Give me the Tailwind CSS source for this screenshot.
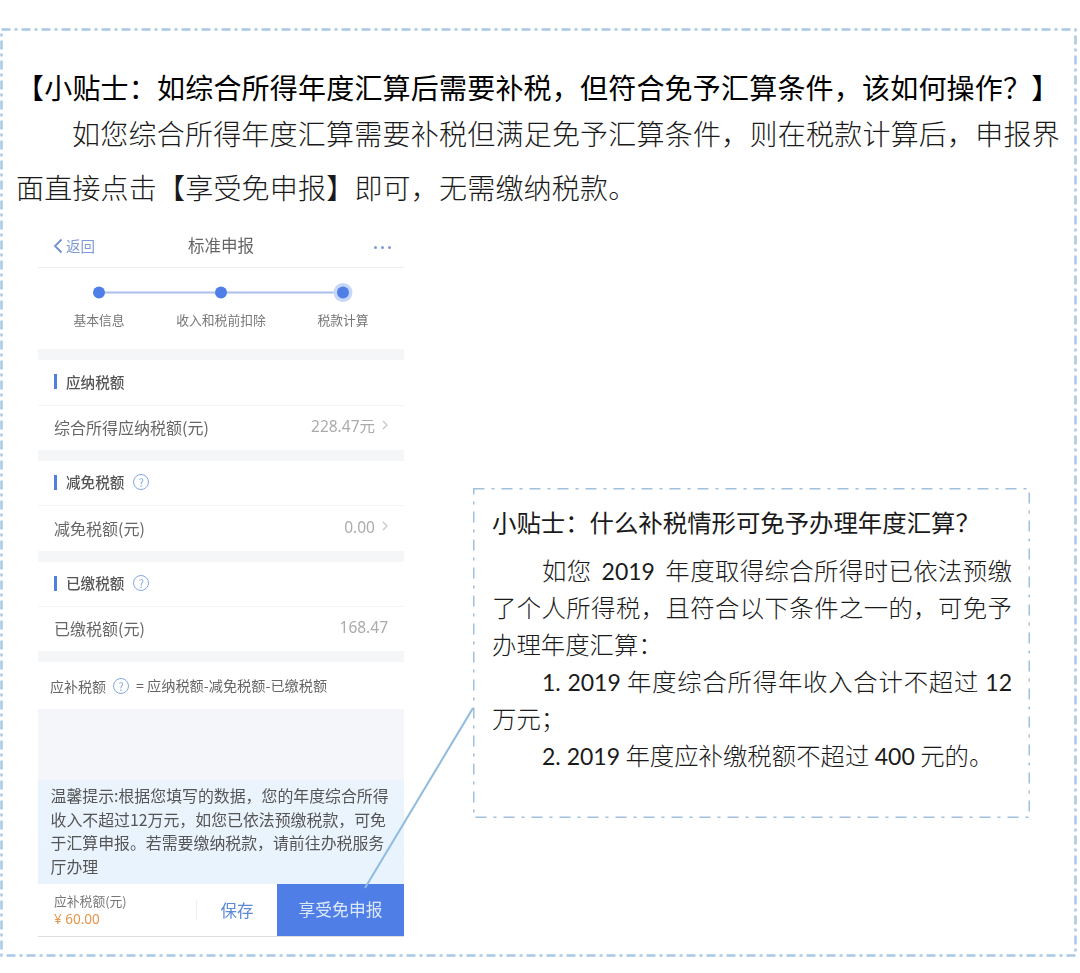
<!doctype html>
<html lang="zh-CN">
<head>
<meta charset="utf-8">
<script src="https://cdn.jsdelivr.net/npm/@tailwindcss/browser@4"></script>
</head>
<body class="bg-white">
<div class="relative w-[1080px] h-[973px] overflow-hidden bg-white text-[#1a1a1a] font-['Noto_Sans_CJK_SC','Noto_Sans',sans-serif]">

  <!-- outer decorative frame -->
  <svg class="absolute left-0 top-0 pointer-events-none" width="1080" height="973" fill="none">
    <rect x="1.5" y="29.5" width="1074" height="926" stroke="#a8c9e8" stroke-width="2.5" stroke-dasharray="9 4 3 4"/>
  </svg>

  <div class="relative pl-[16px] pr-[20px] pt-[69px]">
    <div class="text-[28px] leading-[37px] tracking-[0.2px] font-normal text-black whitespace-nowrap">【小贴士：如综合所得年度汇算后需要补税，但符合免予汇算条件，该如何操作？】</div>
    <p class="text-[28px] leading-[54px] font-light text-justify indent-[56px] tracking-[0.2px]">如您综合所得年度汇算需要补税但满足免予汇算条件，则在税款计算后，申报界面直接点击【享受免申报】即可，无需缴纳税款。</p>
  </div>

  <div class="relative flex items-start pl-[38px] mt-[18px]">
    <!-- phone -->
    <div class="w-[366px] shrink-0 bg-white blur-[0.4px]">
      <div class="grid grid-cols-3 items-center h-[36px] pb-[8px] pl-[15px] pr-[13px] border-b border-[#eeeeee]">
        <div class="flex items-center gap-[3px] text-[14.5px] text-[#7f9ad4]">
          <svg width="10" height="16" viewBox="0 0 10 16" fill="none"><path d="M8.5 1.5 2 8l6.5 6.5" stroke="#6f8fd6" stroke-width="1.8"/></svg>
          <span>返回</span>
        </div>
        <div class="text-center text-[16.5px] text-[#666666] -ml-[2px] whitespace-nowrap">标准申报</div>
        <div class="flex justify-end gap-[4px] pt-[4px]">
          <span class="size-[3px] rounded-full bg-[#7f9ad4]"></span>
          <span class="size-[3px] rounded-full bg-[#7f9ad4]"></span>
          <span class="size-[3px] rounded-full bg-[#7f9ad4]"></span>
        </div>
      </div>

      <div class="pt-[12px] pb-[20px]">
        <svg class="block" width="366" height="24" fill="none">
          <line x1="61" y1="12.5" x2="305" y2="12.5" stroke="#a9c0ee" stroke-width="2"/>
          <circle cx="61" cy="12.5" r="6" fill="#4f7fe6"/>
          <circle cx="183" cy="12.5" r="6" fill="#4f7fe6"/>
          <circle cx="305" cy="12.5" r="9.5" fill="#c6d7f7"/>
          <circle cx="305" cy="12.5" r="6" fill="#4f7fe6"/>
        </svg>
        <div class="grid grid-cols-3 mt-[7px] text-[12.8px] leading-[18px] text-center text-[#777777]">
          <div>基本信息</div><div>收入和税前扣除</div><div>税款计算</div>
        </div>
      </div>

      <div class="h-[11px] bg-[#f5f6f8]"></div>
      <div class="flex items-center h-[46px] pb-[2px] pl-[16px] gap-[9px] border-b border-[#f4f4f4] text-[14.6px] font-medium text-[#555555]">
        <span class="w-[3px] h-[15px] bg-[#4f7fe0]"></span><span>应纳税额</span>
      </div>
      <div class="flex items-center justify-between h-[44px] pb-[2px] pl-[16px] pr-[16px] text-[16px] text-[#666666]">
        <span>综合所得应纳税额(元)</span>
        <span class="flex items-center gap-[7px] text-[15.5px] text-[#ababab] font-['Noto_Sans','Noto_Sans_CJK_SC',sans-serif]">228.47元
          <svg class="-mt-[4px]" width="6" height="10" viewBox="0 0 6 10" fill="none"><path d="M1 1l4 4-4 4" stroke="#c4c4c4" stroke-width="1.2"/></svg>
        </span>
      </div>

      <div class="h-[11px] bg-[#f5f6f8]"></div>
      <div class="flex items-center h-[45px] pb-[2px] pl-[16px] gap-[9px] border-b border-[#f4f4f4] text-[14.6px] font-medium text-[#555555]">
        <span class="w-[3px] h-[15px] bg-[#4f7fe0]"></span><span>减免税额</span>
        <span class="flex items-center justify-center size-[16px] rounded-full border border-[#86a9e4] text-[11px] font-normal text-[#86a9e4]">?</span>
      </div>
      <div class="flex items-center justify-between h-[45px] pb-[2px] pl-[16px] pr-[16px] text-[16px] text-[#666666]">
        <span>减免税额(元)</span>
        <span class="flex items-center gap-[7px] text-[15.5px] text-[#ababab] font-['Noto_Sans','Noto_Sans_CJK_SC',sans-serif]">0.00
          <svg class="-mt-[4px]" width="6" height="10" viewBox="0 0 6 10" fill="none"><path d="M1 1l4 4-4 4" stroke="#c4c4c4" stroke-width="1.2"/></svg>
        </span>
      </div>

      <div class="h-[11px] bg-[#f5f6f8]"></div>
      <div class="flex items-center h-[45px] pb-[2px] pl-[16px] gap-[9px] border-b border-[#f4f4f4] text-[14.6px] font-medium text-[#555555]">
        <span class="w-[3px] h-[15px] bg-[#4f7fe0]"></span><span>已缴税额</span>
        <span class="flex items-center justify-center size-[16px] rounded-full border border-[#86a9e4] text-[11px] font-normal text-[#86a9e4]">?</span>
      </div>
      <div class="flex items-center justify-between h-[44px] pb-[2px] pl-[16px] pr-[16px] text-[16px] text-[#666666]">
        <span>已缴税额(元)</span>
        <span class="text-[15.5px] text-[#ababab] font-['Noto_Sans','Noto_Sans_CJK_SC',sans-serif]">168.47</span>
      </div>

      <div class="h-[11px] bg-[#f5f6f8]"></div>
      <div class="flex items-center h-[47px] pt-[1px] pl-[12px] gap-[7px] text-[14px] text-[#666666]">
        <span>应补税额</span>
        <span class="flex items-center justify-center size-[16px] rounded-full border border-[#86a9e4] text-[11px] text-[#86a9e4]">?</span>
        <span class="text-[14.2px]">= 应纳税额-减免税额-已缴税额</span>
      </div>

      <div class="h-[71px] bg-[#f4f6fa]"></div>
      <div class="h-[104px] pt-[4px] pl-[12.5px] text-[15.9px] leading-[23.5px] text-[#555555] whitespace-nowrap bg-linear-to-b from-[#ebf4fd] to-[#e8f3fd]">
        温馨提示:根据您填写的数据，您的年度综合所得<br>收入不超过12万元，如您已依法预缴税款，可免<br>于汇算申报。若需要缴纳税款，请前往办税服务<br>厅办理
      </div>

      <div class="flex items-stretch h-[53px] border-b border-[#dddddd]">
        <div class="w-[158px] pl-[16px] pt-[7px]">
          <div class="text-[12.8px] leading-[20px] text-[#777777]">应补税额(元)</div>
          <div class="text-[13.5px] leading-[16px] text-[#e8954a] font-['Noto_Sans','Noto_Sans_CJK_SC',sans-serif]">¥ 60.00</div>
        </div>
        <div class="w-px h-[20px] mt-[16px] bg-[#eeeeee]"></div>
        <div class="w-[80px] flex items-center justify-center text-[16.5px] text-[#5b8ad8]">保存</div>
        <div class="w-[127px] flex items-center justify-center bg-[#4f7fe6] text-[16.8px] text-[#dbe7fb]">享受免申报</div>
      </div>
    </div>

    <!-- callout -->
    <div class="relative ml-[69px] mt-[256px] w-[557px] h-[330px] pl-[19px] pr-[18px] pt-[17px]">
      <svg class="absolute left-0 top-0 pointer-events-none" width="557" height="330" fill="none">
        <rect x="0.5" y="0.5" width="556" height="329" stroke="#a0c0de" stroke-width="2" stroke-dasharray="11 7 3 7"/>
      </svg>
      <div class="text-[24.4px] leading-[34px] whitespace-nowrap">小贴士：什么补税情形可免予办理年度汇算？</div>
      <div class="mt-[12px] text-[24.4px] leading-[37px] font-light text-justify">
        <p class="indent-[50px]">如您<span class="inline-block indent-0 mx-[10px] font-['Lato'] font-normal text-[23px] leading-none">2019</span>年度取得综合所得时已依法预缴了个人所得税，且符合以下条件之一的，可免予办理年度汇算：</p>
        <p class="indent-[50px]"><span class="font-['Lato'] font-normal text-[23px] leading-none">1. 2019</span> 年度综合所得年收入合计不超过 <span class="font-['Lato'] font-normal text-[23px] leading-none">12</span> 万元；</p>
        <p class="indent-[50px]"><span class="font-['Lato'] font-normal text-[23px] leading-none">2. 2019</span> 年度应补缴税额不超过 <span class="font-['Lato'] font-normal text-[23px] leading-none">400</span> 元的。</p>
      </div>
    </div>
  </div>

  <!-- connector from callout to the button -->
  <svg class="absolute left-0 top-0 pointer-events-none" width="1080" height="973" fill="none">
    <line x1="473" y1="708" x2="365" y2="888" stroke="#8fbbe0" stroke-width="2"/>
  </svg>
</div>
</body>
</html>
